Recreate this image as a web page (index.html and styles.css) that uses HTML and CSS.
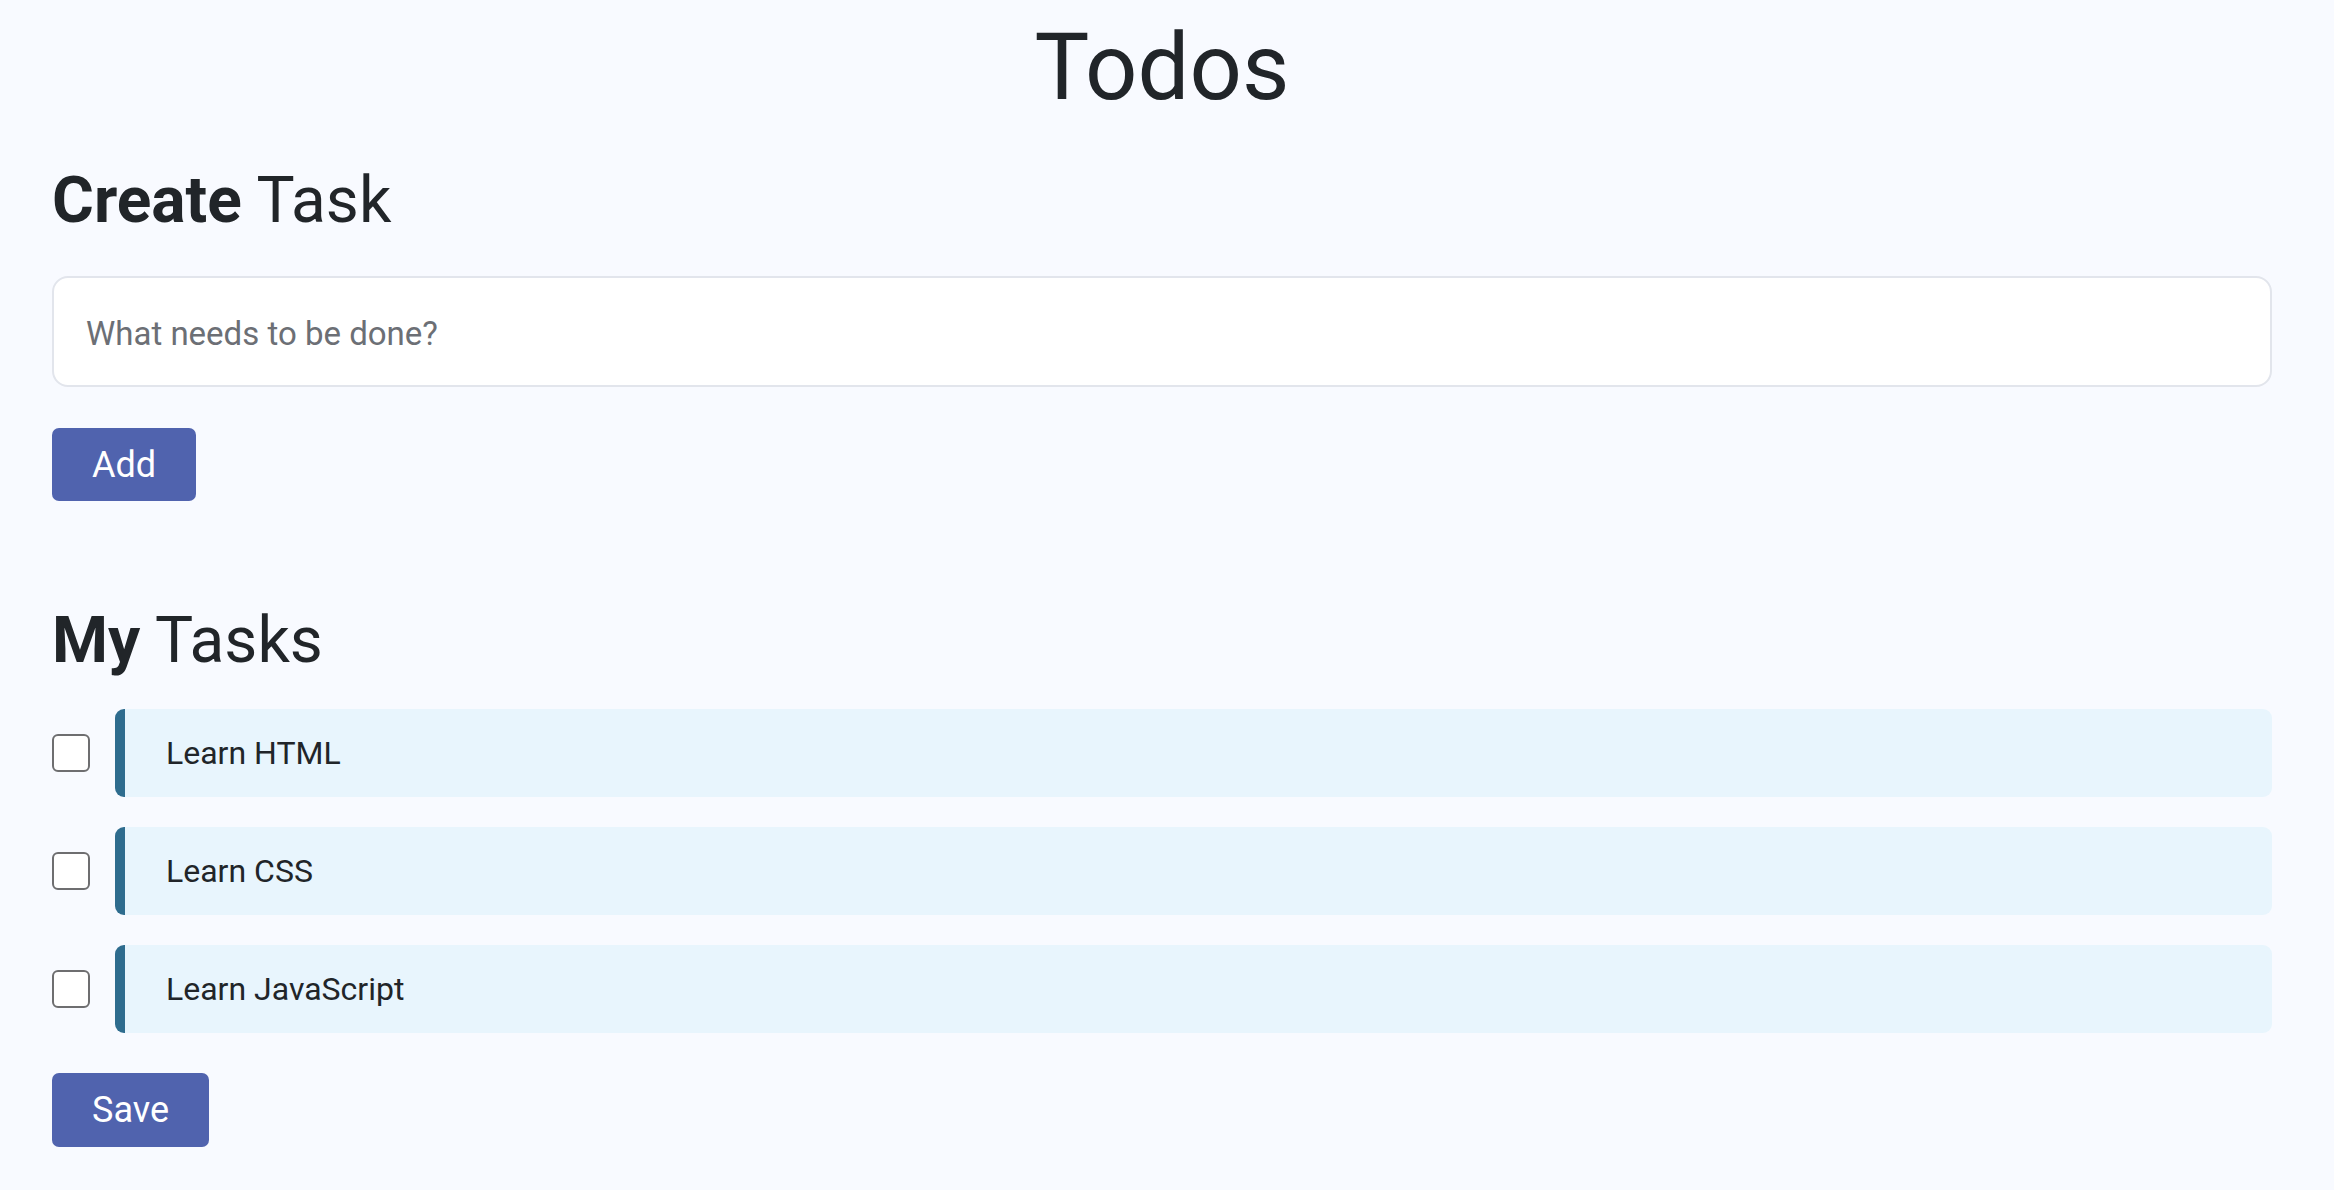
FILE: index.html
```html
<!DOCTYPE html>
<html lang="en">
<head>
<meta charset="utf-8">
<title>Todos</title>
<link rel="stylesheet" href="styles.css">
</head>
<body>
<main class="app">
  <h1 class="title">Todos</h1>
  <section class="create">
    <h2 class="section-title"><strong>Create</strong> Task</h2>
    <input class="task-input" type="text" placeholder="What needs to be done?">
    <button class="btn btn-add" type="button">Add</button>
  </section>
  <section class="tasks">
    <h2 class="section-title"><strong>My</strong> Tasks</h2>
    <ul class="task-list">
      <li class="task-row"><input class="task-check" type="checkbox"><div class="task-item">Learn HTML</div></li>
      <li class="task-row"><input class="task-check" type="checkbox"><div class="task-item">Learn CSS</div></li>
      <li class="task-row"><input class="task-check" type="checkbox"><div class="task-item">Learn JavaScript</div></li>
    </ul>
    <button class="btn btn-save" type="button">Save</button>
  </section>
</main>
</body>
</html>
```

FILE: styles.css
```css
html, body {
  margin: 0;
  padding: 0;
  background: #f8faff;
}
body {
  font-family: Roboto, "Liberation Sans", Arial, sans-serif;
  color: #212529;
}
.app {
  padding: 0 62px 0 52px;
}
.title {
  margin: 13px 0 0;
  font-size: 92px;
  line-height: 1.2;
  font-weight: 400;
  text-align: center;
}
.section-title {
  margin: 0;
  font-size: 64px;
  line-height: 1.2;
  font-weight: 400;
}
.section-title strong {
  font-weight: 700;
}
.create .section-title {
  margin-top: 40px;
}
.task-input {
  display: block;
  box-sizing: border-box;
  width: 100%;
  height: 111px;
  margin-top: 36px;
  padding: 4px 32px 0;
  border: 2px solid #e2e5ec;
  border-radius: 16px;
  background: #ffffff;
  font-family: inherit;
  font-size: 33px;
  color: #212529;
  outline: none;
}
.task-input::placeholder {
  color: #6c6f75;
}
.btn {
  display: block;
  box-sizing: border-box;
  height: 74px;
  padding: 0 40px;
  border: none;
  border-radius: 7px;
  background: #5063ae;
  color: #ffffff;
  font-family: inherit;
  font-size: 36px;
  cursor: pointer;
}
.btn-add {
  margin-top: 41px;
  height: 73px;
}
.tasks .section-title {
  margin-top: 102px;
}
.task-list {
  list-style: none;
  margin: 29px 0 0;
  padding: 0;
  display: flex;
  flex-direction: column;
  gap: 30px;
}
.task-row {
  display: flex;
  align-items: center;
  gap: 25px;
}
.task-check {
  appearance: none;
  -webkit-appearance: none;
  box-sizing: border-box;
  width: 38px;
  height: 38px;
  margin: 0;
  border: 2.5px solid #6e6e70;
  border-radius: 6px;
  background: #ffffff;
  flex: none;
}
.task-item {
  flex: 1;
  display: flex;
  align-items: center;
  box-sizing: border-box;
  height: 88px;
  padding-left: 41px;
  background: #e8f5fd;
  border-left: 10px solid #2e6c8e;
  border-radius: 9px;
  font-size: 32px;
}
.btn-save {
  margin-top: 40px;
}
```
